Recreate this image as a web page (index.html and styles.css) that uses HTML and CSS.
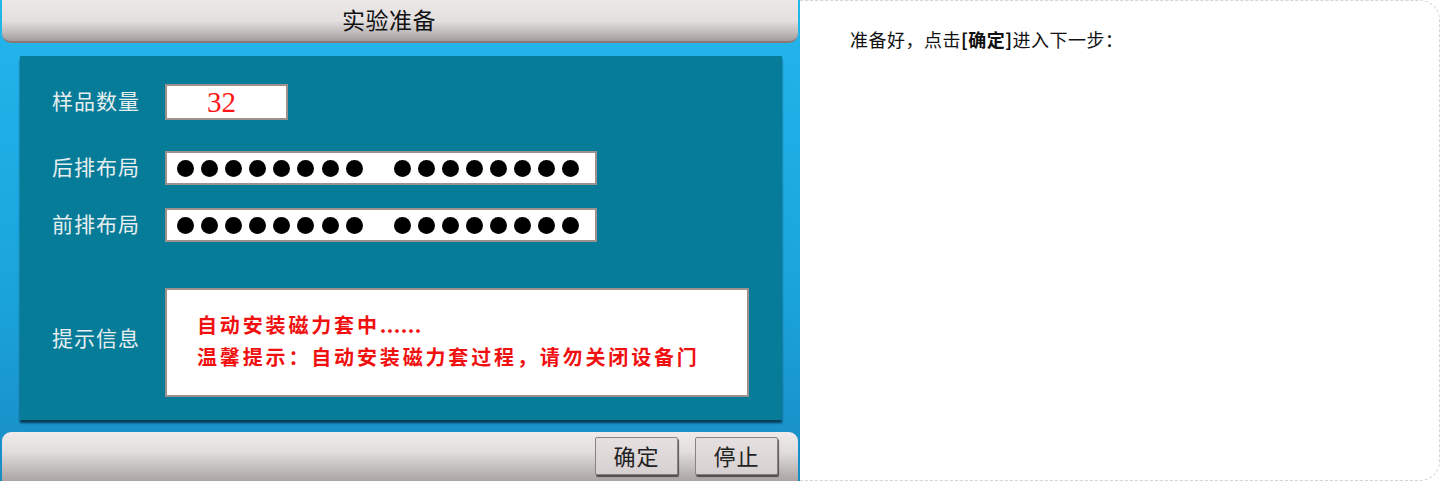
FILE: index.html
```html
<!DOCTYPE html>
<html lang="zh-CN">
<head>
<meta charset="utf-8">
<title>实验准备</title>
<link rel="stylesheet" href="styles.css">
</head>
<body>
<div class="frame">
  <div class="screen">
    <div class="topbar">实验准备</div>
    <div class="panel">
      <div class="row row-count">
        <div class="label">样品数量</div>
        <div class="box box-count">32</div>
      </div>
      <div class="row row-back">
        <div class="label">后排布局</div>
        <div class="box box-dots">
          <div class="group"><i></i><i></i><i></i><i></i><i></i><i></i><i></i><i></i></div>
          <div class="group"><i></i><i></i><i></i><i></i><i></i><i></i><i></i><i></i></div>
        </div>
      </div>
      <div class="row row-front">
        <div class="label">前排布局</div>
        <div class="box box-dots">
          <div class="group"><i></i><i></i><i></i><i></i><i></i><i></i><i></i><i></i></div>
          <div class="group"><i></i><i></i><i></i><i></i><i></i><i></i><i></i><i></i></div>
        </div>
      </div>
      <div class="row row-tip">
        <div class="label label-tip">提示信息</div>
        <div class="box box-tip">
          <p>自动安装磁力套中<span class="ellipsis">......</span></p>
          <p>温馨提示：自动安装磁力套过程，请勿关闭设备门</p>
        </div>
      </div>
    </div>
    <div class="bottombar">
      <div class="btn">确定</div>
      <div class="btn">停止</div>
    </div>
  </div>
  <div class="note">准备好，点击<b>[确定]</b>进入下一步：</div>
</div>
</body>
</html>
```
FILE: styles.css
```css
html, body {
  margin: 0;
  padding: 0;
  background: #ffffff;
}
body {
  font-family: "Noto Sans CJK SC", "Noto Sans", sans-serif;
}
.frame {
  width: 1440px;
  height: 481px;
  box-sizing: border-box;
  border: 1px dashed #d4d4d4;
  border-radius: 20px;
  display: flex;
}
.screen {
  width: 800px;
  height: 481px;
  margin: -1px 0 -1px -1px;
  flex: none;
  background: linear-gradient(#22b6ec, #1aa4dc 60%, #1a8cc4);
  display: flex;
  flex-direction: column;
}
.topbar {
  height: 43px;
  margin: 0 2px;
  box-sizing: border-box;
  border-radius: 0 0 9px 9px;
  background: linear-gradient(#ebe7e7 0%, #e4e0e0 50%, #b9b4b4 85%, #a29c9c 100%);
  border-bottom: 2px solid #8c7676;
  text-align: center;
  padding-right: 22px;
  font-size: 23px;
  line-height: 39px;
  color: #111;
  letter-spacing: 0.5px;
}
.panel {
  margin: 13px 18px 0 20px;
  height: 364px;
  box-sizing: border-box;
  background: #077c98;
  box-shadow: 0 3px 2px rgba(0, 30, 50, 0.75);
  padding: 28px 0 0 32px;
  display: flex;
  flex-direction: column;
}
.row {
  display: flex;
  align-items: center;
}
.label {
  width: 113px;
  flex: none;
  font-size: 21px;
  line-height: 26px;
  margin-top: -4px;
  color: #e6eef0;
  letter-spacing: 1px;
}
.label-tip {
  margin-top: -12px;
}
.box {
  background: #ffffff;
  border: 2px solid #9c918c;
  box-sizing: border-box;
}
.box-count {
  width: 123px;
  height: 36px;
  text-align: center;
  padding-right: 10px;
  font-family: "Liberation Serif", serif;
  font-size: 29px;
  line-height: 32px;
  color: #ff1414;
}
.row-back {
  margin-top: 31px;
}
.row-front {
  margin-top: 23px;
}
.box-dots {
  width: 432px;
  height: 34px;
  display: flex;
  align-items: center;
  padding-left: 10px;
  gap: 31px;
}
.group {
  display: flex;
  gap: 7.1px;
}
.group i {
  display: block;
  width: 17px;
  height: 17px;
  border-radius: 50%;
  background: #000;
}
.row-tip {
  margin-top: 46px;
}
.box-tip {
  width: 584px;
  height: 109px;
  padding: 19px 0 0 30px;
}
.box-tip p {
  margin: 0;
  font-size: 20px;
  line-height: 32px;
  font-weight: bold;
  color: #f01010;
  letter-spacing: 2.85px;
}
.ellipsis {
  letter-spacing: 0.5px;
}
.bottombar {
  margin: 12px 2px 0 2px;
  height: 49px;
  box-sizing: border-box;
  border-radius: 9px 9px 0 0;
  background: linear-gradient(#efebeb 0%, #e2dede 40%, #bdb8b8 80%, #aaa4a4 100%);
  display: flex;
  justify-content: flex-end;
  gap: 17px;
  padding: 5px 20px 0 0;
}
.btn {
  width: 83px;
  height: 38px;
  box-sizing: border-box;
  background: linear-gradient(#e6e0e0, #d6d0d0);
  border: 1px solid #8a8282;
  border-radius: 2px;
  box-shadow: 1px 2px 1px rgba(40, 30, 30, 0.7);
  text-align: center;
  font-size: 22px;
  line-height: 35px;
  color: #222;
  letter-spacing: 1px;
}
.note {
  padding: 26px 0 0 50px;
  font-size: 18px;
  line-height: 24px;
  color: #111;
  letter-spacing: 0.5px;
}
.note b {
  font-weight: bold;
}
```
